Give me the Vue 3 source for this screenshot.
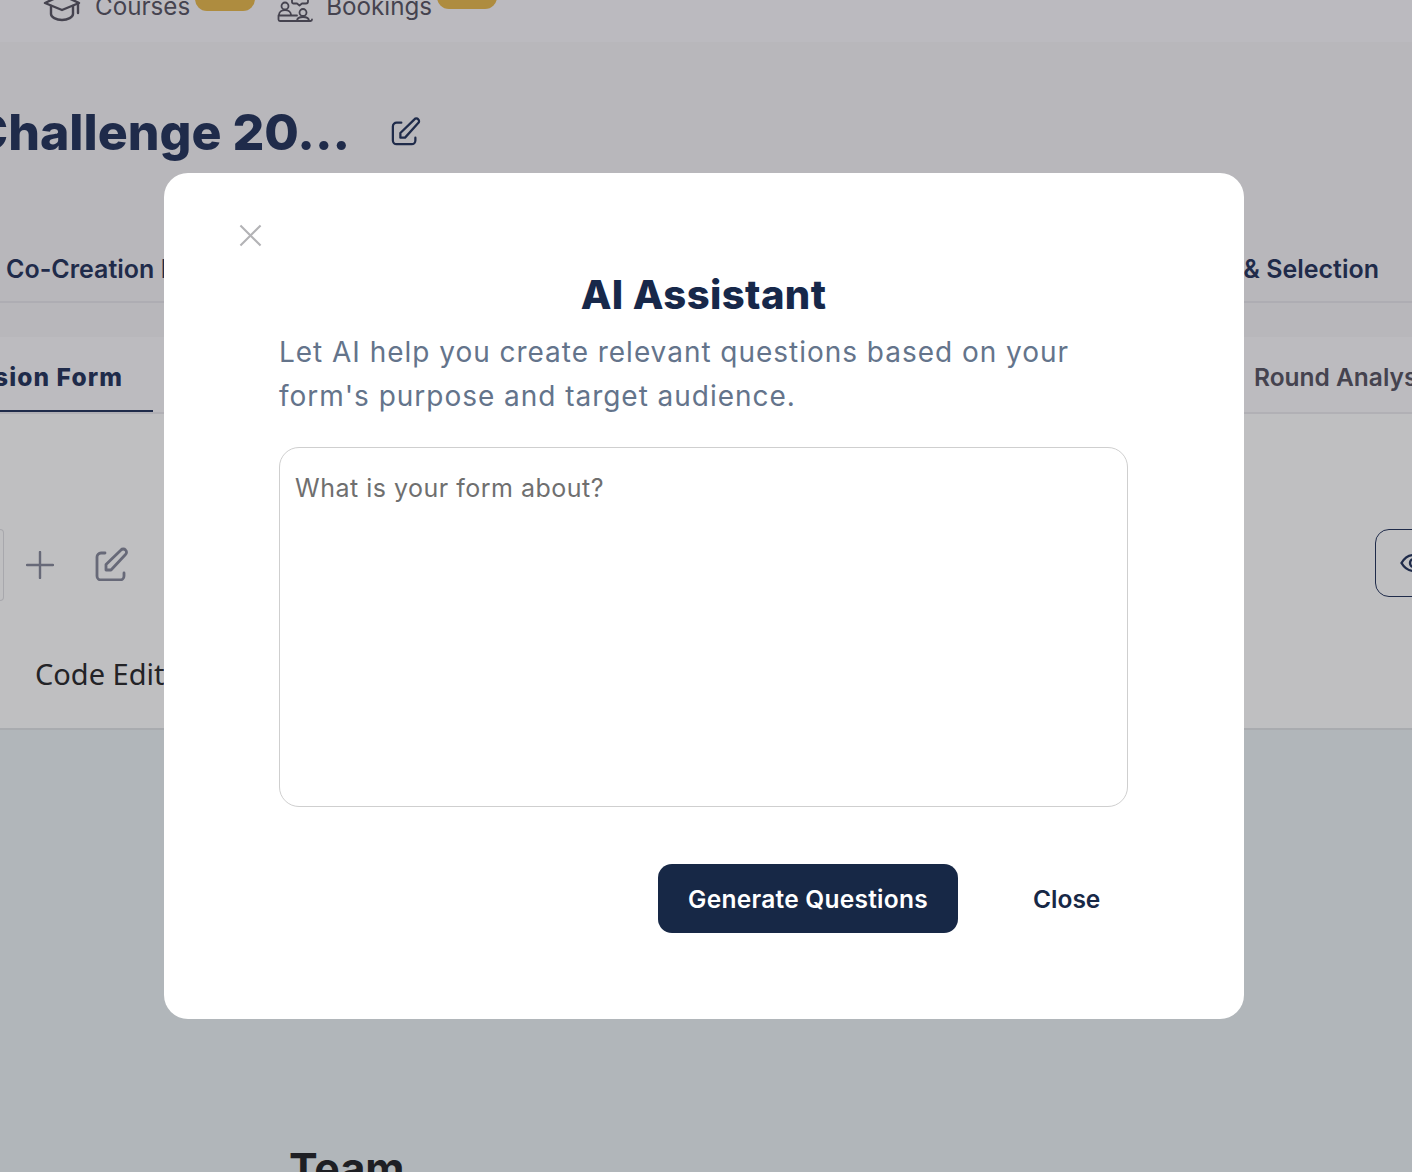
<script setup>
const navItems = [
  { label: 'Courses', icon: 'courses' },
  { label: 'Bookings', icon: 'bookings' },
]
</script>

<template>
  <div class="page">
    <nav class="nav">
      <div v-for="item in navItems" :key="item.label" class="nav-item" :class="item.icon">
        <svg v-if="item.icon === 'courses'" class="nav-icon" viewBox="0 0 36 22" fill="none" stroke="#45434f" stroke-width="2.400" stroke-linecap="round" stroke-linejoin="round">
          <path d="M1 3 18 -5l17 8-17 7z" />
          <path d="M7 6v8c0 3 5 6 11 6s11-3 11-6V6" />
          <path d="M34 3v10" />
        </svg>
        <svg v-else class="nav-icon" viewBox="0 0 36 22" fill="none" stroke="#45434f" stroke-width="1.800" stroke-linecap="round" stroke-linejoin="round">
          <circle cx="8" cy="6" r="3.500" />
          <circle cx="26" cy="12.500" r="3.500" />
          <path d="M2 15c0-3 2.500-5 6-5s6 2 6 5" />
          <path d="M20 21c0-2 2-4 6-4s6 2 6 4" />
          <path d="M1.500 15.500H20M1.500 15.500v4a1.500 1.500 0 0 0 1.500 1.500H33.500a1.500 1.500 0 0 0 1.500-1.500" />
          <path d="M15 -3v5a1.500 1.500 0 0 0 1.500 1.500H20l2.500 2 2.500-2h4a2 2 0 0 0 2-2v-5" />
        </svg>
        <span class="nav-label">{{ item.label }}</span>
        <span class="nav-badge"></span>
      </div>
    </nav>

    <header class="head">
      <div class="title-row">
        <h1 class="page-title">Challenge 20...</h1>
        <svg class="edit-icon" viewBox="0 0 32 32" fill="none" stroke="#1f2b4a" stroke-width="2.400" stroke-linecap="round" stroke-linejoin="round">
          <path d="M11 6H6a4 4 0 0 0-4 4v15a4 4 0 0 0 4 4h16a4 4 0 0 0 4-4v-3" />
          <path d="M10 22v-5L25 2.500a2.600 2.600 0 0 1 4 0 2.600 2.600 0 0 1 0 4L15 22z" />
        </svg>
      </div>
      <div class="stage-row">
        <span class="stage-left">Co-Creation Phase</span>
        <span class="stage-right">Review &amp; Selection</span>
      </div>
    </header>

    <div class="subtabs">
      <span class="subtab active">Submission Form</span>
      <span class="subtab-right">Round Analysis</span>
    </div>

    <section class="editor">
      <div class="tools">
        <div class="select-stub"></div>
        <svg class="plus" viewBox="0 0 28 28" fill="none" stroke="#676978" stroke-width="2.400" stroke-linecap="round">
          <path d="M14 1v26M1 14h26" />
        </svg>
        <svg class="pen" viewBox="0 0 34 34" fill="none" stroke="#676978" stroke-width="2.800" stroke-linecap="round" stroke-linejoin="round">
          <path d="M10 6H6a4 4 0 0 0-4 4v19a4 4 0 0 0 4 4h19a4 4 0 0 0 4-4v-3" />
          <path d="M11 23v-5.500L26 3a3 3 0 0 1 4.500 0 3 3 0 0 1 0 4.500L16 23z" />
        </svg>
        <div class="preview-btn">
          <svg class="eye" viewBox="0 0 28 20" fill="none" stroke="#1f2b4a" stroke-width="2.400">
            <path d="M1.500 10C5 4 9 2 14 2s9 2 12.500 8C23 16 19 18 14 18S5 16 1.500 10z" />
            <circle cx="14" cy="10" r="4" />
          </svg>
        </div>
      </div>
      <div class="code-tab">Code Editor</div>
    </section>

    <section class="lower">
      <h2 class="team">Team</h2>
    </section>

    <div class="modal">
      <svg class="close-x" viewBox="0 0 24 24" fill="none" stroke="#b3b3b6" stroke-width="2.200">
        <path d="M1.500 1.500 22.500 22.500M22.500 1.500 1.500 22.500" />
      </svg>
      <h2 class="modal-title">AI Assistant</h2>
      <p class="modal-text">Let AI help you create relevant questions based on your form's purpose and target audience.</p>
      <textarea class="prompt" placeholder="What is your form about?"></textarea>
      <div class="actions">
        <button class="generate" type="button">Generate Questions</button>
        <button class="close" type="button">Close</button>
      </div>
    </div>
  </div>
</template>

<style>
html, body { margin: 0; padding: 0; background: #b1b6ba; }
</style>

<style scoped>
* { box-sizing: border-box; }
.page {
  position: relative;
  width: 1412px;
  height: 1172px;
  overflow: hidden;
  background: #b1b6ba;
  font-family: Inter, "Liberation Sans", sans-serif;
}
.nav {
  height: 42px;
  background: #bbbabf;
  display: flex;
  gap: 22px;
  padding-left: 44px;
  overflow: hidden;
}
.nav-item { display: flex; align-items: flex-start; height: 42px; }
.nav-icon { width: 36px; height: 22px; flex: none; overflow: visible; }
.nav-label { font-size: 24.200px; line-height: 30px; color: #45434f; margin: -8px 0 0 15px; }
.bookings .nav-label { margin-left: 13px; }
.nav-badge { width: 60px; height: 20px; margin: -9px 0 0 5px; background: #ae8c3f; border-radius: 0 0 12px 12px; }
.bookings .nav-badge { margin-top: -11px; }
.head { height: 295px; background: #b8b7bb; overflow: hidden; }
.title-row { display: flex; align-items: center; height: 60px; margin: 60px 0 0 -29px; }
.page-title { margin: 0; font-size: 50px; line-height: 60px; font-weight: 800; color: #1f2b4a; white-space: nowrap; }
.edit-icon { width: 30px; height: 30px; margin-left: 41px; flex: none; }
.stage-row {
  display: flex;
  justify-content: space-between;
  align-items: center;
  height: 64px;
  margin-top: 77px;
  padding: 0 33px 2px 6px;
  border-bottom: 2px solid #aeadb3;
  color: #1f2b4a;
  font-size: 25px;
  font-weight: 600;
  white-space: nowrap;
}
.subtabs {
  height: 77px;
  background: #bcbbbf;
  border-bottom: 2px solid #b1b0b5;
  display: flex;
  justify-content: space-between;
  font-size: 24.500px;
  white-space: nowrap;
  overflow: hidden;
}
.subtab { width: 260px; margin-left: -107px; padding-right: 30px; text-align: right; line-height: 80px; height: 76px; border-bottom: 3px solid #1f2b4a; color: #1f2b4a; font-weight: 800; letter-spacing: 1.100px; }
.subtab-right { width: 158px; line-height: 80px; color: #45434f; font-weight: 600; }
.editor {
  height: 316px;
  background: #bfbfc1;
  border-bottom: 2px solid #a9abaf;
  overflow: hidden;
}
.tools { display: flex; align-items: center; height: 72px; margin-top: 115px; }
.select-stub { width: 4px; height: 72px; border: 1px solid #a8a8ad; border-left: 0; border-radius: 0 8px 8px 0; }
.plus { width: 28px; height: 28px; margin-left: 22px; flex: none; }
.pen { width: 34px; height: 34px; margin: -3px 0 0 41px; flex: none; }
.preview-btn {
  width: 70px;
  height: 68px;
  margin-left: auto;
  margin-right: -33px;
  border: 1.500px solid #1f2b4a;
  border-radius: 14px;
  display: flex;
  align-items: center;
  padding-left: 24px;
  margin-top: -4px;
}
.eye { width: 28px; height: 20px; flex: none; }
.code-tab { font-family: "Noto Sans", sans-serif; font-size: 29px; line-height: 40px; color: #232327; margin: 53px 0 0 35px; white-space: nowrap; }
.lower { padding-left: 289px; }
.team { margin: 412px 0 0; font-size: 43px; line-height: 52px; font-weight: 700; color: #1e1f24; }
.modal {
  position: absolute;
  left: 164px;
  top: 173px;
  width: 1080px;
  height: 846px;
  background: #fff;
  border-radius: 24px;
  padding: 101px 116px 0 115px;
}
.close-x { position: absolute; left: 75px; top: 51px; width: 23px; height: 23px; }
.modal-title { margin: 0; text-align: center; font-size: 40px; line-height: 42px; font-weight: 800; color: #17284a; letter-spacing: 0.400px; }
.modal-text { margin: 14px 0 0; font-size: 28px; line-height: 44px; letter-spacing: 0.970px; color: #64748b; }
.prompt {
  display: block;
  width: 849px;
  height: 360px;
  margin-top: 29px;
  padding: 22px 15px;
  border: 1px solid #cfcfcf;
  border-radius: 20px;
  resize: none;
  outline: 0;
  background: #fff;
  font-family: Inter, sans-serif;
  font-size: 25px;
  line-height: 36px;
  letter-spacing: 0.500px;
}
.prompt::placeholder { color: #6f6f6f; opacity: 1; }
.actions { display: flex; align-items: center; margin-top: 57px; padding-left: 379px; }
.generate {
  width: 300px;
  height: 69px;
  border: 0;
  border-radius: 14px;
  background: #172846;
  color: #fff;
  font-family: Inter, sans-serif;
  font-size: 24.500px;
  font-weight: 600;
  letter-spacing: 0.250px;
}
.close {
  border: 0;
  background: none;
  padding: 0;
  margin-left: 75px;
  color: #172846;
  font-family: Inter, sans-serif;
  font-size: 24.500px;
  font-weight: 600;
}
</style>
